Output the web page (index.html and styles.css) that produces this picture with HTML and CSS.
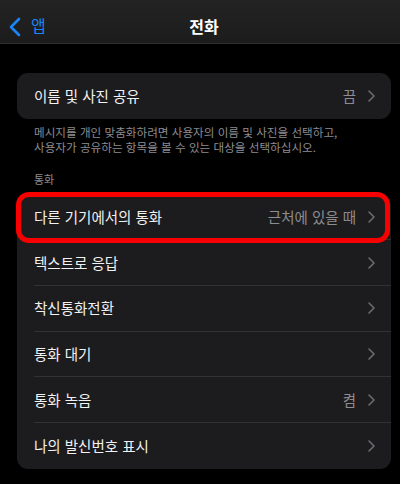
FILE: index.html
```html
<!DOCTYPE html>
<html lang="ko">
<head>
<meta charset="utf-8">
<link rel="stylesheet" href="styles.css">
</head>
<body>
<div class="screen">
  <header class="nav">
    <div class="back">
      <svg class="back-icon" width="12" height="20" viewBox="0 0 12 20"><path d="M10 2 L2 10 L10 18" fill="none" stroke="#1a86f5" stroke-width="2.6" stroke-linecap="round" stroke-linejoin="round"/></svg>
      <span class="back-label">앱</span>
    </div>
    <div class="title">전화</div>
  </header>

  <main class="content">
    <section class="card card-first">
      <div class="row">
        <div class="row-inner last">
          <span class="label">이름 및 사진 공유</span>
          <span class="value">끔</span>
          <svg class="chev" width="7" height="12" viewBox="0 0 7 12"><path d="M1 1 L6 6 L1 11" fill="none" stroke="#6b6b70" stroke-width="1.6" stroke-linecap="round" stroke-linejoin="round"/></svg>
        </div>
      </div>
    </section>
    <p class="footer"><span class="fline">메시지를 개인 맞춤화하려면 사용자의 이름 및 사진을 선택하고,</span><span class="fline">사용자가 공유하는 항목을 볼 수 있는 대상을 선택하십시오.</span></p>

    <div class="section-header">통화</div>
    <section class="card">
      <div class="row highlighted">
        <div class="row-inner">
          <span class="label">다른 기기에서의 통화</span>
          <span class="value">근처에 있을 때</span>
          <svg class="chev" width="7" height="12" viewBox="0 0 7 12"><path d="M1 1 L6 6 L1 11" fill="none" stroke="#6b6b70" stroke-width="1.6" stroke-linecap="round" stroke-linejoin="round"/></svg>
        </div>
        <div class="red-box"></div>
      </div>
      <div class="row">
        <div class="row-inner">
          <span class="label">텍스트로 응답</span>
          <svg class="chev" width="7" height="12" viewBox="0 0 7 12"><path d="M1 1 L6 6 L1 11" fill="none" stroke="#6b6b70" stroke-width="1.6" stroke-linecap="round" stroke-linejoin="round"/></svg>
        </div>
      </div>
      <div class="row">
        <div class="row-inner">
          <span class="label">착신통화전환</span>
          <svg class="chev" width="7" height="12" viewBox="0 0 7 12"><path d="M1 1 L6 6 L1 11" fill="none" stroke="#6b6b70" stroke-width="1.6" stroke-linecap="round" stroke-linejoin="round"/></svg>
        </div>
      </div>
      <div class="row">
        <div class="row-inner">
          <span class="label">통화 대기</span>
          <svg class="chev" width="7" height="12" viewBox="0 0 7 12"><path d="M1 1 L6 6 L1 11" fill="none" stroke="#6b6b70" stroke-width="1.6" stroke-linecap="round" stroke-linejoin="round"/></svg>
        </div>
      </div>
      <div class="row">
        <div class="row-inner">
          <span class="label">통화 녹음</span>
          <span class="value">켬</span>
          <svg class="chev" width="7" height="12" viewBox="0 0 7 12"><path d="M1 1 L6 6 L1 11" fill="none" stroke="#6b6b70" stroke-width="1.6" stroke-linecap="round" stroke-linejoin="round"/></svg>
        </div>
      </div>
      <div class="row">
        <div class="row-inner last">
          <span class="label">나의 발신번호 표시</span>
          <svg class="chev" width="7" height="12" viewBox="0 0 7 12"><path d="M1 1 L6 6 L1 11" fill="none" stroke="#6b6b70" stroke-width="1.6" stroke-linecap="round" stroke-linejoin="round"/></svg>
        </div>
      </div>
    </section>
  </main>
</div>
</body>
</html>
```

FILE: styles.css
```css
* { box-sizing: border-box; }
html, body {
  margin: 0;
  padding: 0;
  background: #000;
}
body {
  font-family: "Noto Sans CJK KR", "Noto Sans", sans-serif;
  color: #fff;
}
.screen {
  width: 400px;
  height: 484px;
  overflow: hidden;
  background: #000;
}
.nav {
  position: relative;
  height: 44px;
  padding-top: 10px;
  background: linear-gradient(#232323, #1c1c1c);
  border-bottom: 1px solid #2e2e2e;
  display: flex;
  align-items: center;
  justify-content: center;
}
.back {
  position: absolute;
  left: 9px;
  top: 10px;
  bottom: 0;
  display: flex;
  align-items: center;
  gap: 10px;
}
.back-icon { display: block; }
.back-label {
  color: #1a86f5;
  font-size: 16px;
  line-height: 20px;
  margin-top: -3px;
}
.title {
  font-size: 16px;
  font-weight: 700;
  line-height: 20px;
  margin-top: -2px;
  margin-left: 8px;
}
.content {
  padding: 0 9px 0 17px;
}
.card {
  background: #1c1c1e;
  border-radius: 11px;
}
.card-first {
  margin-top: 29px;
}
.row {
  position: relative;
  display: flex;
  padding-left: 17px;
}
.row-inner {
  flex: 1;
  display: flex;
  align-items: center;
  height: 45.7px;
  padding-right: 16px;
  border-bottom: 1px solid #323234;
}
.row-inner.last { border-bottom: none; }
.label {
  flex: 1;
  font-size: 14.5px;
  color: #f2f2f2;
  margin-top: -1px;
}
.value {
  font-size: 14.5px;
  color: #8c8c91;
  margin-right: 12px;
  margin-top: -1px;
}
.chev { display: block; }
.footer {
  margin: 6px 0 0 0;
  padding-left: 17px;
  display: flex;
  flex-direction: column;
  color: #8c8c91;
}
.fline {
  display: block;
  font-size: 11.6px;
  line-height: 15px;
  height: 15px;
  white-space: nowrap;
}
.section-header {
  margin-top: 17px;
  padding-left: 17px;
  font-size: 11px;
  line-height: 14px;
  color: #8c8c91;
}
.card:last-child { margin-top: 9px; }
.red-box {
  position: absolute;
  top: -3px;
  bottom: -3px;
  left: -1px;
  right: 1px;
  border: 5px solid #f80000;
  border-radius: 13px;
  pointer-events: none;
}
```
